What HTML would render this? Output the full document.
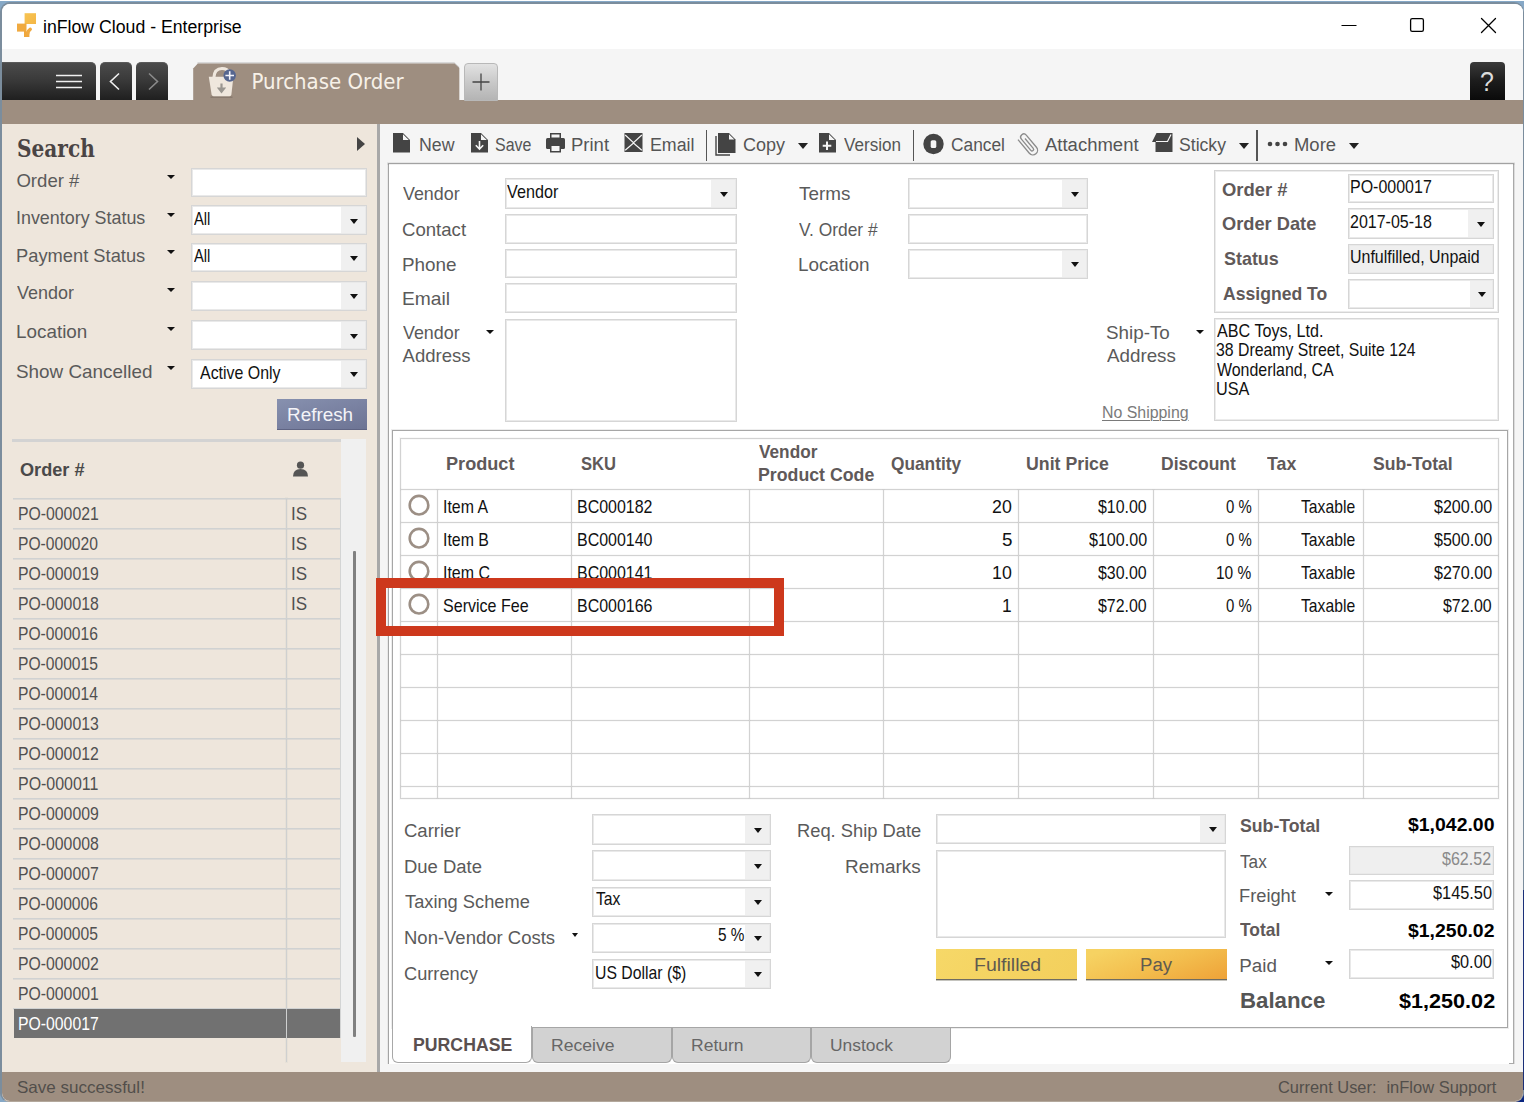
<!DOCTYPE html><html><head><meta charset="utf-8"><title>inFlow Cloud - Enterprise</title><style>
*{box-sizing:border-box;margin:0;padding:0}
html,body{width:1524px;height:1102px;overflow:hidden}
body{background:#84a6c4;font-family:"Liberation Sans",sans-serif;position:relative}
.a{position:absolute}
.t{position:absolute;white-space:nowrap;line-height:1;transform-origin:0 0}
.lbl{color:#555;font-size:17.5px}
.blbl{color:#5a5252;font-size:17.5px;font-weight:bold}
.inp{position:absolute;background:#fff;border:1px solid #d6d6d6;box-shadow:inset 0 0 0 1px #e9e9e9}
.dd{position:absolute;background:#f0f0f0;top:1px;bottom:1px;right:1px}
.arr{position:absolute;width:0;height:0;border-left:4.5px solid transparent;border-right:4.5px solid transparent;border-top:5px solid #111}
.ft{position:absolute;white-space:nowrap;line-height:1;color:#111;font-size:17.5px;transform:scaleX(.86);transform-origin:0 0}
.ftr{position:absolute;white-space:nowrap;line-height:1;color:#111;font-size:17.5px;transform:scaleX(.86);transform-origin:100% 0;text-align:right}
</style></head><body>
<div class="a" style="left:0;top:0;width:1524px;height:1px;background:#fff"></div>
<div class="a" style="left:0;top:1px;width:1524px;height:1101px;background:linear-gradient(#86a9c8,#86a8c6 3px,#86a8c6)"></div>
<div class="a" style="left:1516px;top:880px;width:8px;height:222px;background:linear-gradient(#42558a,#0d2878 12px,#0a2680)"></div>
<div class="a" id="win" style="left:0;top:2px;width:1524px;height:1100px;border:2px solid #7b8d9d;border-right-width:1px;border-bottom-width:1px;border-bottom-color:#b3a89c;border-radius:10px 10px 9px 9px;background:#fff"></div>
<div class="a" style="left:1523px;top:890px;width:1px;height:200px;background:#1a2f78"></div>
<div class="a" id="clip" style="left:2px;top:4px;width:1521px;height:1097px;border-radius:8px 8px 8px 8px;overflow:hidden"><div class="a" id="root" style="left:-2px;top:-4px;width:1524px;height:1102px">
<div class="a" style="left:0;top:0;width:1524px;height:49px;background:#fff"></div>
<div class="t" style="left:43.02px;top:18px;font-size:18px;color:#000;transform:scaleX(0.9826);">inFlow Cloud - Enterprise</div>
<div class="a" style="left:0;top:49px;width:1524px;height:51px;background:#f5f5f5"></div>
<div class="a" style="left:0;top:100px;width:1524px;height:24px;background:#9e8e80"></div>
<div class="a" style="left:0;top:124px;width:377px;height:948px;background:#eee6dc"></div>
<div class="a" style="left:377px;top:124px;width:3px;height:948px;background:#a8a8a8"></div>
<div class="a" style="left:380px;top:124px;width:1144px;height:948px;background:#f5f5f5"></div>
<div class="a" style="left:0;top:1072px;width:1524px;height:30px;background:#9e8e80"></div>
<svg class="a" style="left:15px;top:11px" width="24" height="28" viewBox="0 0 24 28"><defs><linearGradient id="og" x1="0" y1="0" x2="1" y2="1"><stop offset="0" stop-color="#f7c452"/><stop offset="1" stop-color="#f4b646"/></linearGradient></defs><rect x="9.600" y="2.200" width="11.400" height="10.800" fill="url(#og)"/><rect x="2" y="12.600" width="9.500" height="8" fill="#f0aa40"/><path d="M9 20 H11.500 Q11.800 22.500 14.400 22.300 V26 H9Z" fill="#f0a73c"/><path d="M12.800 22.500 Q13.200 19.500 15.300 18.300" stroke="#f0aa40" stroke-width="3.300" fill="none" stroke-linecap="round"/></svg>
<svg class="a" style="left:1330px;top:10px" width="180" height="34" viewBox="0 0 180 34"><path d="M11.5 15.5h15" stroke="#000" stroke-width="1.2"/><rect x="80.6" y="8.6" width="12.8" height="12.8" rx="1.6" fill="none" stroke="#000" stroke-width="1.3"/><path d="M151.5 8.5l14 14M165.5 8.5l-14 14" stroke="#000" stroke-width="1.3" stroke-linecap="round"/></svg>
<div class="a" style="left:0;top:62px;width:96px;height:38px;background:linear-gradient(#4b4b4b,#3a3a3a 45%,#1f1f1f);border-radius:0 5px 0 0;border-top:1px solid #5a5a5a"></div>
<div class="a" style="left:100px;top:62px;width:32px;height:38px;background:linear-gradient(#4b4b4b,#3a3a3a 45%,#1f1f1f);border-radius:5px 5px 0 0;border-top:1px solid #5a5a5a"></div>
<div class="a" style="left:136px;top:62px;width:32px;height:38px;background:linear-gradient(#4b4b4b,#3a3a3a 45%,#1f1f1f);border-radius:5px 5px 0 0;border-top:1px solid #5a5a5a"></div>
<svg class="a" style="left:50px;top:68px" width="124" height="28" viewBox="0 0 124 28"><path d="M6 7.5h26M6 13.5h26M6 19.5h26" stroke="#f0f0f0" stroke-width="1.5"/><path d="M69 5.5l-8.5 8 8.5 8" stroke="#f0f0f0" stroke-width="1.6" fill="none"/><path d="M99 5.5l8.5 8 -8.5 8" stroke="#8a8a8a" stroke-width="1.6" fill="none"/></svg>
<svg class="a" style="left:190px;top:60px" width="276" height="42" viewBox="0 0 276 42"><path d="M7.500 2.800 H264 L268.500 7 V41" stroke="#bdbdbd" stroke-width="1.300" fill="none" opacity=".7"/><path d="M3.200 42 V8.500 L7.800 3.500 H264.500 L269.300 8 V42Z" fill="#9e8e80"/></svg>
<svg class="a" style="left:204px;top:64px" width="36" height="36" viewBox="0 0 36 36"><path d="M9.800 14 Q10.300 4.600 18 4.600 Q23.500 4.600 25.500 9" stroke="#efe7dd" stroke-width="3" fill="none"/><path d="M6.500 33.200 h22" stroke="#6f6258" stroke-width="1.200" opacity=".55"/><path d="M4.800 12.800 H29.400 L27.400 30.500 Q27.200 32.200 25.500 32.200 H9.600 Q7.900 32.200 7.600 30.500Z" fill="#efe7dd"/><path d="M17.500 19.500V27" stroke="#9a9690" stroke-width="2.200" fill="none"/><path d="M12.800 23.500H22.200L17.500 29.500Z" fill="#9a9690"/><circle cx="25.700" cy="11.500" r="6.200" fill="#56668f"/><path d="M25.700 7.200v8.600M21.400 11.500h8.600" stroke="#f4f4fa" stroke-width="1.600"/></svg>
<div class="t" style="left:251.40px;top:71px;font-size:22px;color:#f7f1e8;font-family:'DejaVu Sans','Liberation Sans',sans-serif;font-stretch:condensed;">Purchase Order</div>
<div class="a" style="left:464px;top:63px;width:34px;height:38px;background:linear-gradient(#e2e2e2,#c9c9c9 50%,#b4b4b4);border:1px solid #b8b8b8;border-radius:4px 4px 0 0"></div>
<svg class="a" style="left:464px;top:63px" width="34" height="38"><path d="M17 10.500v17M8.500 19h17" stroke="#444" stroke-width="1.300"/></svg>
<div class="a" style="left:1470px;top:62px;width:35px;height:38px;background:linear-gradient(#3a3a3a,#1c1c1c 50%,#0a0a0a);border-radius:4px 4px 0 0"></div>
<div class="t" style="left:1480.39px;top:68px;font-size:27.5px;color:#dcdcdc;transform:scaleX(0.9071);">?</div>
<div class="a" style="left:388px;top:163px;width:1125.500px;height:900.500px;background:#fff;border-left:1px solid #a4a4a4;border-right:1px solid #a9a9a9;box-shadow:1px 0 0 rgba(0,0,0,.10),-1px 0 0 rgba(0,0,0,.05)"></div>
<div class="a" style="left:1509px;top:1062.500px;width:5px;height:1.500px;background:#a9a9a9"></div>
<div class="t" style="left:402.60px;top:185px;font-size:18.5px;color:#5a5a5a;transform:scaleX(0.9661);">Vendor</div>
<div class="t" style="left:401.60px;top:221px;font-size:18.5px;color:#5a5a5a;transform:scaleX(1.0048);">Contact</div>
<div class="t" style="left:401.58px;top:256px;font-size:18.5px;color:#5a5a5a;transform:scaleX(1.0192);">Phone</div>
<div class="t" style="left:401.56px;top:290px;font-size:18.5px;color:#5a5a5a;transform:scaleX(1.0400);">Email</div>
<div class="t" style="left:402.60px;top:324px;font-size:18.5px;color:#5a5a5a;transform:scaleX(0.9661);">Vendor</div>
<div class="t" style="left:402.60px;top:347px;font-size:18.5px;color:#5a5a5a;">Address</div>
<div class="arr" style="left:486px;top:330px;border-left-width:4.200px;border-right-width:4.200px;border-top-width:4.800px"></div>
<div class="inp" style="left:504.5px;top:178px;width:232.5px;height:31px;background:#fff"><div class="dd" style="width:24px"></div><div class="arr" style="right:8.5px;top:13.0px"></div></div>
<div class="inp" style="left:504.5px;top:214px;width:232.5px;height:29.5px;background:#fff"></div>
<div class="inp" style="left:504.5px;top:248.7px;width:232.5px;height:29.3px;background:#fff"></div>
<div class="inp" style="left:504.5px;top:283px;width:232.5px;height:29.5px;background:#fff"></div>
<div class="inp" style="left:504.5px;top:319px;width:232.5px;height:103px;background:#fff"></div>
<div class="t" style="left:507.30px;top:182px;font-size:19px;color:#111;transform:scaleX(0.8517);">Vendor</div>
<div class="t" style="left:798.70px;top:185px;font-size:18.5px;color:#5a5a5a;transform:scaleX(1.0200);">Terms</div>
<div class="t" style="left:798.70px;top:221px;font-size:18.5px;color:#5a5a5a;transform:scaleX(0.9405);">V. Order #</div>
<div class="t" style="left:797.68px;top:256px;font-size:18.5px;color:#5a5a5a;transform:scaleX(1.0221);">Location</div>
<div class="inp" style="left:908px;top:178px;width:180px;height:31px;background:#fff"><div class="dd" style="width:24px"></div><div class="arr" style="right:8.5px;top:13.0px"></div></div>
<div class="inp" style="left:908px;top:214px;width:180px;height:29.5px;background:#fff"></div>
<div class="inp" style="left:908px;top:248.7px;width:180px;height:30.5px;background:#fff"><div class="dd" style="width:24px"></div><div class="arr" style="right:8.5px;top:12.8px"></div></div>
<div class="t" style="left:1106.28px;top:324px;font-size:18.5px;color:#5a5a5a;transform:scaleX(1.0164);">Ship-To</div>
<div class="t" style="left:1107.30px;top:347px;font-size:18.5px;color:#5a5a5a;transform:scaleX(1.0149);">Address</div>
<div class="arr" style="left:1195.500px;top:329.700px;border-left-width:4.200px;border-right-width:4.200px;border-top-width:4.800px"></div>
<div class="t" style="left:1101.91px;top:405px;font-size:16px;color:#7a7a7a;transform:scaleX(0.9930);text-decoration:underline;text-decoration-thickness:1px;text-underline-offset:2px">No Shipping</div>
<div class="a" style="left:1214px;top:169.500px;width:285px;height:143px;border:1px solid #d4d4d4;box-shadow:inset 0 0 0 1px #ececec"></div>
<div class="t" style="left:1222.20px;top:181px;font-size:18.5px;color:#605959;font-weight:bold;transform:scaleX(0.9969);">Order #</div>
<div class="t" style="left:1222.21px;top:215px;font-size:18.5px;color:#605959;font-weight:bold;transform:scaleX(0.9862);">Order Date</div>
<div class="t" style="left:1223.53px;top:250px;font-size:18.5px;color:#605959;font-weight:bold;transform:scaleX(0.9691);">Status</div>
<div class="t" style="left:1223.20px;top:285px;font-size:18.5px;color:#605959;font-weight:bold;transform:scaleX(0.9505);">Assigned To</div>
<div class="inp" style="left:1347.5px;top:174px;width:146.5px;height:29px;background:#fff"></div>
<div class="inp" style="left:1347.5px;top:208px;width:146.5px;height:31px;background:#fff"><div class="dd" style="width:24px"></div><div class="arr" style="right:8.5px;top:13.0px"></div></div>
<div class="inp" style="left:1347.5px;top:244px;width:146.5px;height:29.5px;background:#efefef"></div>
<div class="inp" style="left:1347.5px;top:279px;width:146.5px;height:29.5px;background:#fff"><div class="dd" style="width:22px"></div><div class="arr" style="right:7.5px;top:12.2px"></div></div>
<div class="t" style="left:1349.86px;top:177px;font-size:19px;color:#111;transform:scaleX(0.8417);">PO-000017</div>
<div class="t" style="left:1349.86px;top:212px;font-size:19px;color:#111;transform:scaleX(0.8417);">2017-05-18</div>
<div class="t" style="left:1349.86px;top:247px;font-size:19px;color:#111;transform:scaleX(0.8408);">Unfulfilled, Unpaid</div>
<div class="a" style="left:1214px;top:318px;width:285px;height:102.500px;border:1px solid #d6d6d6;box-shadow:inset 0 0 0 1px #ececec;background:#fff"></div>
<div class="t" style="left:1217.30px;top:321px;font-size:19px;color:#111;transform:scaleX(0.8500);">ABC Toys, Ltd.</div>
<div class="t" style="left:1216.47px;top:340px;font-size:19px;color:#111;transform:scaleX(0.8326);">38 Dreamy Street, Suite 124</div>
<div class="t" style="left:1217.30px;top:360px;font-size:19px;color:#111;transform:scaleX(0.8388);">Wonderland, CA</div>
<div class="t" style="left:1216.44px;top:379px;font-size:19px;color:#111;transform:scaleX(0.8553);">USA</div>
<div class="a" style="left:392px;top:430px;width:1116px;height:598px;background:#fff;border:1px solid #a6a6a6;box-shadow:0 0 0 1px rgba(0,0,0,.07)"></div>
<div class="a" style="left:400px;top:438px;width:1099px;height:361px;border:1px solid #d2d2d2;box-shadow:0 0 0 1px rgba(0,0,0,.025), inset 0 0 0 1px rgba(0,0,0,.025)"></div>
<div class="a" style="left:401px;top:489px;width:1097px;height:1px;background:#d2d2d2;box-shadow:0 0 0 1px rgba(0,0,0,.02)"></div>
<div class="a" style="left:401px;top:522px;width:1097px;height:1px;background:#d2d2d2;box-shadow:0 0 0 1px rgba(0,0,0,.02)"></div>
<div class="a" style="left:401px;top:555px;width:1097px;height:1px;background:#d2d2d2;box-shadow:0 0 0 1px rgba(0,0,0,.02)"></div>
<div class="a" style="left:401px;top:588px;width:1097px;height:1px;background:#d2d2d2;box-shadow:0 0 0 1px rgba(0,0,0,.02)"></div>
<div class="a" style="left:401px;top:621px;width:1097px;height:1px;background:#d2d2d2;box-shadow:0 0 0 1px rgba(0,0,0,.02)"></div>
<div class="a" style="left:401px;top:654px;width:1097px;height:1px;background:#d2d2d2;box-shadow:0 0 0 1px rgba(0,0,0,.02)"></div>
<div class="a" style="left:401px;top:687px;width:1097px;height:1px;background:#d2d2d2;box-shadow:0 0 0 1px rgba(0,0,0,.02)"></div>
<div class="a" style="left:401px;top:720px;width:1097px;height:1px;background:#d2d2d2;box-shadow:0 0 0 1px rgba(0,0,0,.02)"></div>
<div class="a" style="left:401px;top:753px;width:1097px;height:1px;background:#d2d2d2;box-shadow:0 0 0 1px rgba(0,0,0,.02)"></div>
<div class="a" style="left:401px;top:786px;width:1097px;height:1px;background:#d2d2d2;box-shadow:0 0 0 1px rgba(0,0,0,.02)"></div>
<div class="a" style="left:437px;top:490px;width:1px;height:308px;background:#d2d2d2;box-shadow:0 0 0 1px rgba(0,0,0,.02)"></div>
<div class="a" style="left:571px;top:490px;width:1px;height:308px;background:#d2d2d2;box-shadow:0 0 0 1px rgba(0,0,0,.02)"></div>
<div class="a" style="left:749px;top:490px;width:1px;height:308px;background:#d2d2d2;box-shadow:0 0 0 1px rgba(0,0,0,.02)"></div>
<div class="a" style="left:883px;top:490px;width:1px;height:308px;background:#d2d2d2;box-shadow:0 0 0 1px rgba(0,0,0,.02)"></div>
<div class="a" style="left:1018px;top:490px;width:1px;height:308px;background:#d2d2d2;box-shadow:0 0 0 1px rgba(0,0,0,.02)"></div>
<div class="a" style="left:1153px;top:490px;width:1px;height:308px;background:#d2d2d2;box-shadow:0 0 0 1px rgba(0,0,0,.02)"></div>
<div class="a" style="left:1258px;top:490px;width:1px;height:308px;background:#d2d2d2;box-shadow:0 0 0 1px rgba(0,0,0,.02)"></div>
<div class="a" style="left:1363px;top:490px;width:1px;height:308px;background:#d2d2d2;box-shadow:0 0 0 1px rgba(0,0,0,.02)"></div>
<div class="t" style="left:445.71px;top:455px;font-size:18.4px;color:#605959;font-weight:bold;transform:scaleX(0.9853);">Product</div>
<div class="t" style="left:580.50px;top:455px;font-size:18.4px;color:#605959;font-weight:bold;transform:scaleX(0.9027);">SKU</div>
<div class="t" style="left:758.70px;top:443px;font-size:18.4px;color:#605959;font-weight:bold;transform:scaleX(0.9365);">Vendor</div>
<div class="t" style="left:757.74px;top:466px;font-size:18.4px;color:#605959;font-weight:bold;transform:scaleX(0.9647);">Product Code</div>
<div class="t" style="left:891.06px;top:455px;font-size:18.4px;color:#605959;font-weight:bold;transform:scaleX(0.9392);">Quantity</div>
<div class="t" style="left:1026.34px;top:455px;font-size:18.4px;color:#605959;font-weight:bold;transform:scaleX(0.9643);">Unit Price</div>
<div class="t" style="left:1161.25px;top:455px;font-size:18.4px;color:#605959;font-weight:bold;transform:scaleX(0.9513);">Discount</div>
<div class="t" style="left:1266.90px;top:455px;font-size:18.4px;color:#605959;font-weight:bold;transform:scaleX(0.9667);">Tax</div>
<div class="t" style="left:1372.64px;top:455px;font-size:18.4px;color:#605959;font-weight:bold;transform:scaleX(0.9556);">Sub-Total</div>
<svg class="a" style="left:407px;top:493.0px" width="24" height="24"><circle cx="12" cy="12.200" r="9.300" fill="none" stroke="#9c8f85" stroke-width="2.600"/></svg>
<div class="t" style="left:442.76px;top:497px;font-size:19px;color:#111;transform:scaleX(0.8358);">Item A</div>
<div class="t" style="left:576.56px;top:497px;font-size:19px;color:#111;transform:scaleX(0.8409);">BC000182</div>
<div class="t" style="left:991.97px;top:497px;font-size:19px;color:#111;transform:scaleX(0.9350);">20</div>
<div class="t" style="left:1097.60px;top:497px;font-size:19px;color:#111;transform:scaleX(0.8379);">$10.00</div>
<div class="t" style="left:1225.90px;top:497px;font-size:19px;color:#111;transform:scaleX(0.7875);">0 %</div>
<div class="t" style="left:1301.20px;top:497px;font-size:19px;color:#111;transform:scaleX(0.8262);">Taxable</div>
<div class="t" style="left:1433.60px;top:497px;font-size:19px;color:#111;transform:scaleX(0.8456);">$200.00</div>
<svg class="a" style="left:407px;top:526.0px" width="24" height="24"><circle cx="12" cy="12.200" r="9.300" fill="none" stroke="#9c8f85" stroke-width="2.600"/></svg>
<div class="t" style="left:442.76px;top:530px;font-size:19px;color:#111;transform:scaleX(0.8358);">Item B</div>
<div class="t" style="left:576.56px;top:530px;font-size:19px;color:#111;transform:scaleX(0.8409);">BC000140</div>
<div class="t" style="left:1001.71px;top:530px;font-size:19px;color:#111;transform:scaleX(0.9889);">5</div>
<div class="t" style="left:1088.70px;top:530px;font-size:19px;color:#111;transform:scaleX(0.8456);">$100.00</div>
<div class="t" style="left:1225.90px;top:530px;font-size:19px;color:#111;transform:scaleX(0.7875);">0 %</div>
<div class="t" style="left:1301.20px;top:530px;font-size:19px;color:#111;transform:scaleX(0.8262);">Taxable</div>
<div class="t" style="left:1433.60px;top:530px;font-size:19px;color:#111;transform:scaleX(0.8456);">$500.00</div>
<svg class="a" style="left:407px;top:559.0px" width="24" height="24"><circle cx="12" cy="12.200" r="9.300" fill="none" stroke="#9c8f85" stroke-width="2.600"/></svg>
<div class="t" style="left:442.76px;top:563px;font-size:19px;color:#111;transform:scaleX(0.8389);">Item C</div>
<div class="t" style="left:576.56px;top:563px;font-size:19px;color:#111;transform:scaleX(0.8409);">BC000141</div>
<div class="t" style="left:991.97px;top:563px;font-size:19px;color:#111;transform:scaleX(0.9350);">10</div>
<div class="t" style="left:1097.60px;top:563px;font-size:19px;color:#111;transform:scaleX(0.8379);">$30.00</div>
<div class="t" style="left:1216.09px;top:563px;font-size:19px;color:#111;transform:scaleX(0.8143);">10 %</div>
<div class="t" style="left:1301.20px;top:563px;font-size:19px;color:#111;transform:scaleX(0.8262);">Taxable</div>
<div class="t" style="left:1433.60px;top:563px;font-size:19px;color:#111;transform:scaleX(0.8456);">$270.00</div>
<svg class="a" style="left:407px;top:592.0px" width="24" height="24"><circle cx="12" cy="12.200" r="9.300" fill="none" stroke="#9c8f85" stroke-width="2.600"/></svg>
<div class="t" style="left:442.75px;top:596px;font-size:19px;color:#111;transform:scaleX(0.8450);">Service Fee</div>
<div class="t" style="left:576.56px;top:596px;font-size:19px;color:#111;transform:scaleX(0.8409);">BC000166</div>
<div class="t" style="left:1002.49px;top:596px;font-size:19px;color:#111;transform:scaleX(0.9111);">1</div>
<div class="t" style="left:1097.60px;top:596px;font-size:19px;color:#111;transform:scaleX(0.8379);">$72.00</div>
<div class="t" style="left:1225.90px;top:596px;font-size:19px;color:#111;transform:scaleX(0.7875);">0 %</div>
<div class="t" style="left:1301.20px;top:596px;font-size:19px;color:#111;transform:scaleX(0.8262);">Taxable</div>
<div class="t" style="left:1442.50px;top:596px;font-size:19px;color:#111;transform:scaleX(0.8379);">$72.00</div>
<div class="t" style="left:403.61px;top:822px;font-size:18.8px;color:#5a5a5a;transform:scaleX(0.9860);">Carrier</div>
<div class="t" style="left:403.62px;top:858px;font-size:18.8px;color:#5a5a5a;transform:scaleX(0.9821);">Due Date</div>
<div class="t" style="left:404.60px;top:893px;font-size:18.8px;color:#5a5a5a;transform:scaleX(0.9719);">Taxing Scheme</div>
<div class="t" style="left:403.62px;top:929px;font-size:18.8px;color:#5a5a5a;transform:scaleX(0.9842);">Non-Vendor Costs</div>
<div class="t" style="left:403.63px;top:965px;font-size:18.8px;color:#5a5a5a;transform:scaleX(0.9693);">Currency</div>
<div class="arr" style="left:571.500px;top:932.500px;border-left-width:3.800px;border-right-width:3.800px;border-top-width:4.300px"></div>
<div class="inp" style="left:592px;top:814.4px;width:179px;height:30.3px;background:#fff"><div class="dd" style="width:24px"></div><div class="arr" style="right:8.5px;top:12.7px"></div></div>
<div class="inp" style="left:592px;top:850.4px;width:179px;height:30.3px;background:#fff"><div class="dd" style="width:24px"></div><div class="arr" style="right:8.5px;top:12.7px"></div></div>
<div class="inp" style="left:592px;top:886.6px;width:179px;height:30.3px;background:#fff"><div class="dd" style="width:24px"></div><div class="arr" style="right:8.5px;top:12.7px"></div></div>
<div class="inp" style="left:592px;top:922.6px;width:179px;height:30.3px;background:#fff"><div class="dd" style="width:24px"></div><div class="arr" style="right:8.5px;top:12.7px"></div></div>
<div class="inp" style="left:592px;top:958.5px;width:179px;height:30.3px;background:#fff"><div class="dd" style="width:24px"></div><div class="arr" style="right:8.5px;top:12.7px"></div></div>
<div class="t" style="left:596.20px;top:889px;font-size:19px;color:#111;transform:scaleX(0.8276);">Tax</div>
<div class="t" style="left:717.99px;top:925px;font-size:19px;color:#111;transform:scaleX(0.8065);">5 %</div>
<div class="t" style="left:595.37px;top:963px;font-size:19px;color:#111;transform:scaleX(0.8315);">US Dollar ($)</div>
<div class="t" style="left:796.52px;top:822px;font-size:18.8px;color:#5a5a5a;transform:scaleX(0.9754);">Req. Ship Date</div>
<div class="t" style="left:844.79px;top:858px;font-size:18.8px;color:#5a5a5a;transform:scaleX(1.0081);">Remarks</div>
<div class="inp" style="left:936.4px;top:814.2px;width:289.8px;height:29.6px;background:#fff"><div class="dd" style="width:24px"></div><div class="arr" style="right:8.5px;top:12.3px"></div></div>
<div class="inp" style="left:936.4px;top:849.8px;width:289.8px;height:88.5px;background:#fff"></div>
<div class="a" style="left:936.400px;top:948.800px;width:141px;height:31.500px;background:linear-gradient(135deg,#f6d868,#f3cf5c);border-bottom:1px solid #6f6c62;box-shadow:0 1px 0 rgba(90,85,70,.35)"></div>
<div class="a" style="left:1086.400px;top:948.800px;width:141px;height:31.500px;background:linear-gradient(160deg,#f6d262 10%,#f3bd4d 55%,#eea238);border-bottom:1px solid #6f6c62;box-shadow:0 1px 0 rgba(90,85,70,.35)"></div>
<div class="t" style="left:973.62px;top:956px;font-size:18px;color:#5f5a50;transform:scaleX(1.0833);">Fulfilled</div>
<div class="t" style="left:1140.27px;top:956px;font-size:18px;color:#5f5a50;transform:scaleX(1.0333);">Pay</div>
<div class="t" style="left:1240.14px;top:817px;font-size:18.4px;color:#605959;font-weight:bold;transform:scaleX(0.9617);">Sub-Total</div>
<div class="t" style="left:1407.70px;top:816px;font-size:18.4px;color:#000;font-weight:bold;transform:scaleX(1.0568);">$1,042.00</div>
<div class="t" style="left:1240.30px;top:853px;font-size:18.8px;color:#5a5a5a;transform:scaleX(0.9138);">Tax</div>
<div class="inp" style="left:1349.3px;top:845.9px;width:145.2px;height:29px;background:#efefef"></div>
<div class="t" style="left:1442.20px;top:849px;font-size:19px;color:#8a8a8a;transform:scaleX(0.8448);">$62.52</div>
<div class="t" style="left:1239.33px;top:887px;font-size:18.8px;color:#5a5a5a;transform:scaleX(0.9724);">Freight</div>
<div class="arr" style="left:1324.500px;top:891.800px;border-left-width:4.200px;border-right-width:4.200px;border-top-width:4.800px"></div>
<div class="inp" style="left:1349.3px;top:880.4px;width:145.2px;height:29.3px;background:#fff"></div>
<div class="t" style="left:1432.80px;top:883px;font-size:19px;color:#111;transform:scaleX(0.8588);">$145.50</div>
<div class="t" style="left:1240.30px;top:921px;font-size:18.4px;color:#605959;font-weight:bold;transform:scaleX(0.9452);">Total</div>
<div class="t" style="left:1407.70px;top:922px;font-size:18.4px;color:#000;font-weight:bold;transform:scaleX(1.0568);">$1,250.02</div>
<div class="t" style="left:1239.30px;top:957px;font-size:18.8px;color:#5a5a5a;">Paid</div>
<div class="arr" style="left:1324.500px;top:961.200px;border-left-width:4.200px;border-right-width:4.200px;border-top-width:4.800px"></div>
<div class="inp" style="left:1349.3px;top:949.3px;width:145.2px;height:29.3px;background:#fff"></div>
<div class="t" style="left:1450.90px;top:952px;font-size:19px;color:#111;transform:scaleX(0.8574);">$0.00</div>
<div class="t" style="left:1239.66px;top:991px;font-size:21.3px;color:#555;font-weight:bold;transform:scaleX(1.0437);">Balance</div>
<div class="t" style="left:1399.40px;top:991px;font-size:20.4px;color:#000;font-weight:bold;transform:scaleX(1.0600);">$1,250.02</div>
<div class="a" style="left:392px;top:1026px;width:140px;height:37px;background:#fff;border:1.500px solid #a8a8a8;border-top:none;border-radius:0 0 6px 6px"></div>
<div class="a" style="left:394px;top:1024px;width:136.500px;height:6px;background:#fff"></div>
<div class="a" style="left:532px;top:1027.500px;width:139.500px;height:35px;background:#d2d2d2;border:1.500px solid #a5a5a5;border-top:none;border-radius:0 0 6px 6px"></div>
<div class="a" style="left:671.5px;top:1027.500px;width:139.500px;height:35px;background:#d2d2d2;border:1.500px solid #a5a5a5;border-top:none;border-radius:0 0 6px 6px"></div>
<div class="a" style="left:811px;top:1027.500px;width:139.500px;height:35px;background:#d2d2d2;border:1.500px solid #a5a5a5;border-top:none;border-radius:0 0 6px 6px"></div>
<div class="t" style="left:413.04px;top:1036px;font-size:18.5px;color:#5a5050;font-weight:bold;transform:scaleX(0.9563);">PURCHASE</div>
<div class="t" style="left:551.27px;top:1037px;font-size:17px;color:#666;transform:scaleX(1.0333);">Receive</div>
<div class="t" style="left:690.97px;top:1037px;font-size:17px;color:#666;transform:scaleX(1.0306);">Return</div>
<div class="t" style="left:830.48px;top:1037px;font-size:17px;color:#666;transform:scaleX(1.0246);">Unstock</div>
<div class="a" style="left:376px;top:578px;width:408px;height:58px;border:10px solid #cd381c"></div>
<div class="a" style="left:388px;top:163px;width:1126px;height:1px;background:#a2a2a2;box-shadow:0 0 0 1px rgba(0,0,0,.06)"></div>
<svg class="a" style="left:393px;top:133px" width="17" height="20" viewBox="0 0 17 20"><path d="M0 0H10L17 7V19.500H0Z" fill="#444"/><path d="M10 1.200V7H15.800Z" fill="#f5f5f5"/></svg>
<div class="t" style="left:419.01px;top:136px;font-size:18px;color:#555;transform:scaleX(0.9857);">New</div>
<svg class="a" style="left:471px;top:133px" width="17" height="20" viewBox="0 0 17 20"><path d="M0 0H10L17 7V19.500H0Z" fill="#444"/><path d="M10 1.200V7H15.800Z" fill="#f5f5f5"/><path d="M8.500 8V16M4.800 12.300L8.500 16 12.200 12.300" stroke="#f5f5f5" stroke-width="1.600" fill="none"/></svg>
<div class="t" style="left:495.11px;top:136px;font-size:18px;color:#555;transform:scaleX(0.8875);">Save</div>
<svg class="a" style="left:546px;top:133px" width="19" height="20" viewBox="0 0 19 20"><rect x="4" y="0" width="11" height="6" fill="#444"/><rect x="5.500" y="1.500" width="8" height="3" fill="#f5f5f5"/><rect x="0" y="5" width="19" height="11" rx="1.500" fill="#444"/><rect x="4" y="12" width="11" height="7.500" fill="#444"/><rect x="5.500" y="13" width="8" height="5" fill="#f5f5f5"/></svg>
<div class="t" style="left:571.47px;top:136px;font-size:18px;color:#555;transform:scaleX(1.0278);">Print</div>
<svg class="a" style="left:624px;top:133px" width="19" height="19" viewBox="0 0 19 19"><rect x="0.500" y="0" width="18" height="19" fill="#444"/><path d="M1.200 2L9.500 9.600 17.800 2M1.200 17.300L9.500 10 17.800 17.300" stroke="#f5f5f5" stroke-width="1.200" fill="none"/></svg>
<div class="t" style="left:649.51px;top:136px;font-size:18px;color:#555;transform:scaleX(0.9884);">Email</div>
<div class="a" style="left:705.500px;top:130px;width:1.500px;height:31px;background:#555"></div>
<svg class="a" style="left:715px;top:133px" width="21" height="23" viewBox="0 0 21 23"><path d="M1 3V22H15" stroke="#444" stroke-width="1.400" fill="none"/><path d="M3 0H14L20.500 6.500V20H3Z" fill="#444"/><path d="M14 1.200V6.500H19.300Z" fill="#f5f5f5"/></svg>
<div class="t" style="left:743.00px;top:136px;font-size:18px;color:#555;">Copy</div>
<div class="arr" style="left:798px;top:142.500px;border-left-width:5.500px;border-right-width:5.500px;border-top-width:6px;border-top-color:#222"></div>
<svg class="a" style="left:819px;top:133px" width="17" height="20" viewBox="0 0 17 20"><path d="M0 0H10L17 7V19.500H0Z" fill="#444"/><path d="M10 1.200V7H15.800Z" fill="#f5f5f5"/><path d="M8 8.500V17M3.700 12.750H12.300" stroke="#f5f5f5" stroke-width="2" fill="none"/></svg>
<div class="t" style="left:844.00px;top:136px;font-size:18px;color:#555;transform:scaleX(0.9492);">Version</div>
<div class="a" style="left:912.800px;top:130px;width:1.500px;height:31px;background:#555"></div>
<svg class="a" style="left:923px;top:133px" width="21" height="22" viewBox="0 0 21 22"><circle cx="10.500" cy="11" r="10.200" fill="#444"/><rect x="7.700" y="7.200" width="5.600" height="7.800" rx="1.600" fill="#f5f5f5"/></svg>
<div class="t" style="left:950.74px;top:136px;font-size:18px;color:#555;transform:scaleX(0.9630);">Cancel</div>
<svg class="a" style="left:1014px;top:130px" width="28" height="28" viewBox="0 0 28 28"><g transform="rotate(-40 14 14) translate(14 14) scale(1.22) translate(-13 -13)" fill="none" stroke="#8c8c8c" stroke-width="1.100"><path d="M9 5V19.500a3.800 3.800 0 0 0 7.600 0V6.500a2.600 2.600 0 0 0-5.200 0V18.500a1.300 1.300 0 0 0 2.600 0V8"/></g></svg>
<div class="t" style="left:1045.30px;top:136px;font-size:18px;color:#555;transform:scaleX(1.0275);">Attachment</div>
<svg class="a" style="left:1152px;top:133px" width="21" height="20" viewBox="0 0 21 20"><path d="M4.500 0H20.500V19H3.500V9H0Z" fill="#444"/><path d="M4 8.500H15.500L19 1.500" stroke="#f5f5f5" stroke-width="1.200" fill="none"/></svg>
<div class="t" style="left:1178.72px;top:136px;font-size:18px;color:#555;transform:scaleX(0.9787);">Sticky</div>
<div class="arr" style="left:1239px;top:142.500px;border-left-width:5.500px;border-right-width:5.500px;border-top-width:6px;border-top-color:#222"></div>
<div class="a" style="left:1256px;top:130px;width:1.500px;height:31px;background:#555"></div>
<svg class="a" style="left:1266px;top:140px" width="24" height="8" viewBox="0 0 24 8"><circle cx="4" cy="4" r="2.300" fill="#444"/><circle cx="11.500" cy="4" r="2.300" fill="#444"/><circle cx="19" cy="4" r="2.300" fill="#444"/></svg>
<div class="t" style="left:1293.57px;top:136px;font-size:18px;color:#555;transform:scaleX(1.0250);">More</div>
<div class="arr" style="left:1349px;top:142.500px;border-left-width:5.500px;border-right-width:5.500px;border-top-width:6px;border-top-color:#222"></div>
<div class="t" style="left:16.74px;top:138px;font-size:23.5px;color:#4a4444;font-family:'DejaVu Serif','Liberation Serif',serif;font-weight:bold;transform:scaleX(0.8556);">Search</div>
<div class="a" style="left:357px;top:136.500px;width:0;height:0;border-top:7px solid transparent;border-bottom:7px solid transparent;border-left:8px solid #444"></div>
<div class="t" style="left:16.40px;top:172px;font-size:18.6px;color:#5a5a5a;">Order #</div>
<div class="arr" style="left:166.500px;top:175.1px;border-left-width:4.200px;border-right-width:4.200px;border-top-width:4.800px"></div>
<div class="t" style="left:16.44px;top:209px;font-size:18.6px;color:#5a5a5a;transform:scaleX(0.9624);">Inventory Status</div>
<div class="arr" style="left:166.500px;top:213.0px;border-left-width:4.200px;border-right-width:4.200px;border-top-width:4.800px"></div>
<div class="t" style="left:16.42px;top:247px;font-size:18.6px;color:#5a5a5a;transform:scaleX(0.9846);">Payment Status</div>
<div class="arr" style="left:166.500px;top:250.2px;border-left-width:4.200px;border-right-width:4.200px;border-top-width:4.800px"></div>
<div class="t" style="left:17.40px;top:284px;font-size:18.6px;color:#5a5a5a;transform:scaleX(0.9661);">Vendor</div>
<div class="arr" style="left:166.500px;top:287.7px;border-left-width:4.200px;border-right-width:4.200px;border-top-width:4.800px"></div>
<div class="t" style="left:16.39px;top:323px;font-size:18.6px;color:#5a5a5a;transform:scaleX(1.0145);">Location</div>
<div class="arr" style="left:166.500px;top:327.0px;border-left-width:4.200px;border-right-width:4.200px;border-top-width:4.800px"></div>
<div class="t" style="left:16.38px;top:363px;font-size:18.6px;color:#5a5a5a;transform:scaleX(1.0150);">Show Cancelled</div>
<div class="arr" style="left:166.500px;top:366.0px;border-left-width:4.200px;border-right-width:4.200px;border-top-width:4.800px"></div>
<div class="inp" style="left:191px;top:167.5px;width:176px;height:29.5px;background:#fff"></div>
<div class="inp" style="left:191px;top:205px;width:176px;height:30px;background:#fff"><div class="dd" style="width:24px"></div><div class="arr" style="right:8.5px;top:12.5px"></div></div>
<div class="inp" style="left:191px;top:243px;width:176px;height:29px;background:#fff"><div class="dd" style="width:24px"></div><div class="arr" style="right:8.5px;top:12.0px"></div></div>
<div class="inp" style="left:191px;top:280.5px;width:176px;height:30px;background:#fff"><div class="dd" style="width:24px"></div><div class="arr" style="right:8.5px;top:12.5px"></div></div>
<div class="inp" style="left:191px;top:320px;width:176px;height:30px;background:#fff"><div class="dd" style="width:24px"></div><div class="arr" style="right:8.5px;top:12.5px"></div></div>
<div class="inp" style="left:191px;top:358.5px;width:176px;height:30.7px;background:#fff"><div class="dd" style="width:24px"></div><div class="arr" style="right:8.5px;top:12.8px"></div></div>
<div class="t" style="left:194.00px;top:209px;font-size:19px;color:#111;transform:scaleX(0.7750);">All</div>
<div class="t" style="left:194.00px;top:246px;font-size:19px;color:#111;transform:scaleX(0.7750);">All</div>
<div class="t" style="left:199.80px;top:363px;font-size:19px;color:#111;transform:scaleX(0.8385);">Active Only</div>
<div class="a" style="left:276.500px;top:398.500px;width:90px;height:31.500px;background:linear-gradient(165deg,#8791af,#7a82a2 50%,#6d7494);border-bottom:1px solid #5f6483"></div>
<div class="t" style="left:287.45px;top:406px;font-size:18px;color:#f4f4f8;transform:scaleX(1.0492);">Refresh</div>
<div class="a" style="left:12px;top:439px;width:329px;height:3px;background:#d3d3d3"></div>
<div class="a" style="left:341px;top:439px;width:25px;height:623px;background:#f0f0f0"></div>
<div class="a" style="left:353px;top:551px;width:3px;height:486px;background:#808080;border-radius:1px"></div>
<div class="t" style="left:20.00px;top:461px;font-size:18px;color:#4a4a4a;font-weight:bold;transform:scaleX(1.0078);">Order #</div>
<svg class="a" style="left:292px;top:461px" width="17" height="16" viewBox="0 0 17 16"><circle cx="8.500" cy="4.200" r="3.600" fill="#555"/><path d="M1 15.500Q1 8 8.500 8Q16 8 16 15.500Z" fill="#555"/></svg>
<div class="a" style="left:286px;top:498px;width:1px;height:564px;background:#cfd0d0;box-shadow:0 0 0 1px rgba(120,130,140,.05)"></div>
<div class="a" style="left:340px;top:498px;width:1px;height:540px;background:#d3d4d4"></div>
<div class="a" style="left:13px;top:498px;width:327px;height:1px;background:#d0d2d2;box-shadow:0 1px 0 rgba(200,204,206,.45)"></div>
<div class="t" style="left:17.96px;top:505px;font-size:18.8px;color:#505050;transform:scaleX(0.8404);">PO-000021</div>
<div class="t" style="left:290.59px;top:505px;font-size:18.8px;color:#505050;transform:scaleX(0.9062);">IS</div>
<div class="a" style="left:13px;top:528px;width:327px;height:1px;background:#d0d2d2;box-shadow:0 1px 0 rgba(200,204,206,.45)"></div>
<div class="t" style="left:17.97px;top:535px;font-size:18.8px;color:#505050;transform:scaleX(0.8316);">PO-000020</div>
<div class="t" style="left:290.59px;top:535px;font-size:18.8px;color:#505050;transform:scaleX(0.9062);">IS</div>
<div class="a" style="left:13px;top:558px;width:327px;height:1px;background:#d0d2d2;box-shadow:0 1px 0 rgba(200,204,206,.45)"></div>
<div class="t" style="left:17.96px;top:565px;font-size:18.8px;color:#505050;transform:scaleX(0.8404);">PO-000019</div>
<div class="t" style="left:290.59px;top:565px;font-size:18.8px;color:#505050;transform:scaleX(0.9062);">IS</div>
<div class="a" style="left:13px;top:588px;width:327px;height:1px;background:#d0d2d2;box-shadow:0 1px 0 rgba(200,204,206,.45)"></div>
<div class="t" style="left:17.96px;top:595px;font-size:18.8px;color:#505050;transform:scaleX(0.8404);">PO-000018</div>
<div class="t" style="left:290.59px;top:595px;font-size:18.8px;color:#505050;transform:scaleX(0.9062);">IS</div>
<div class="a" style="left:13px;top:618px;width:327px;height:1px;background:#d0d2d2;box-shadow:0 1px 0 rgba(200,204,206,.45)"></div>
<div class="t" style="left:17.97px;top:625px;font-size:18.8px;color:#505050;transform:scaleX(0.8316);">PO-000016</div>
<div class="a" style="left:13px;top:648px;width:327px;height:1px;background:#d0d2d2;box-shadow:0 1px 0 rgba(200,204,206,.45)"></div>
<div class="t" style="left:17.97px;top:655px;font-size:18.8px;color:#505050;transform:scaleX(0.8316);">PO-000015</div>
<div class="a" style="left:13px;top:678px;width:327px;height:1px;background:#d0d2d2;box-shadow:0 1px 0 rgba(200,204,206,.45)"></div>
<div class="t" style="left:17.97px;top:685px;font-size:18.8px;color:#505050;transform:scaleX(0.8316);">PO-000014</div>
<div class="a" style="left:13px;top:708px;width:327px;height:1px;background:#d0d2d2;box-shadow:0 1px 0 rgba(200,204,206,.45)"></div>
<div class="t" style="left:17.96px;top:715px;font-size:18.8px;color:#505050;transform:scaleX(0.8404);">PO-000013</div>
<div class="a" style="left:13px;top:738px;width:327px;height:1px;background:#d0d2d2;box-shadow:0 1px 0 rgba(200,204,206,.45)"></div>
<div class="t" style="left:17.96px;top:745px;font-size:18.8px;color:#505050;transform:scaleX(0.8404);">PO-000012</div>
<div class="a" style="left:13px;top:768px;width:327px;height:1px;background:#d0d2d2;box-shadow:0 1px 0 rgba(200,204,206,.45)"></div>
<div class="t" style="left:17.95px;top:775px;font-size:18.8px;color:#505050;transform:scaleX(0.8495);">PO-000011</div>
<div class="a" style="left:13px;top:798px;width:327px;height:1px;background:#d0d2d2;box-shadow:0 1px 0 rgba(200,204,206,.45)"></div>
<div class="t" style="left:17.96px;top:805px;font-size:18.8px;color:#505050;transform:scaleX(0.8404);">PO-000009</div>
<div class="a" style="left:13px;top:828px;width:327px;height:1px;background:#d0d2d2;box-shadow:0 1px 0 rgba(200,204,206,.45)"></div>
<div class="t" style="left:17.96px;top:835px;font-size:18.8px;color:#505050;transform:scaleX(0.8404);">PO-000008</div>
<div class="a" style="left:13px;top:858px;width:327px;height:1px;background:#d0d2d2;box-shadow:0 1px 0 rgba(200,204,206,.45)"></div>
<div class="t" style="left:17.96px;top:865px;font-size:18.8px;color:#505050;transform:scaleX(0.8404);">PO-000007</div>
<div class="a" style="left:13px;top:888px;width:327px;height:1px;background:#d0d2d2;box-shadow:0 1px 0 rgba(200,204,206,.45)"></div>
<div class="t" style="left:17.97px;top:895px;font-size:18.8px;color:#505050;transform:scaleX(0.8316);">PO-000006</div>
<div class="a" style="left:13px;top:918px;width:327px;height:1px;background:#d0d2d2;box-shadow:0 1px 0 rgba(200,204,206,.45)"></div>
<div class="t" style="left:17.97px;top:925px;font-size:18.8px;color:#505050;transform:scaleX(0.8316);">PO-000005</div>
<div class="a" style="left:13px;top:948px;width:327px;height:1px;background:#d0d2d2;box-shadow:0 1px 0 rgba(200,204,206,.45)"></div>
<div class="t" style="left:17.96px;top:955px;font-size:18.8px;color:#505050;transform:scaleX(0.8404);">PO-000002</div>
<div class="a" style="left:13px;top:978px;width:327px;height:1px;background:#d0d2d2;box-shadow:0 1px 0 rgba(200,204,206,.45)"></div>
<div class="t" style="left:17.96px;top:985px;font-size:18.8px;color:#505050;transform:scaleX(0.8404);">PO-000001</div>
<div class="a" style="left:13px;top:1008px;width:327px;height:1px;background:#d0d2d2;box-shadow:0 1px 0 rgba(200,204,206,.45)"></div>
<div class="a" style="left:14px;top:1009px;width:272px;height:29px;background:#717171"></div>
<div class="a" style="left:287px;top:1009px;width:53px;height:29px;background:#717171"></div>
<div class="t" style="left:17.96px;top:1015px;font-size:18.8px;color:#fff;transform:scaleX(0.8404);">PO-000017</div>
<div class="t" style="left:16.67px;top:1079px;font-size:16.5px;color:#524e4b;transform:scaleX(1.0328);">Save successful!</div>
<div class="t" style="left:1278.11px;top:1079px;font-size:16.5px;color:#524e4b;transform:scaleX(0.9948);">Current User:</div>
<div class="t" style="left:1386.40px;top:1079px;font-size:16.5px;color:#524e4b;">inFlow Support</div>
<!--CONTENT-->
</div></div></body></html>
